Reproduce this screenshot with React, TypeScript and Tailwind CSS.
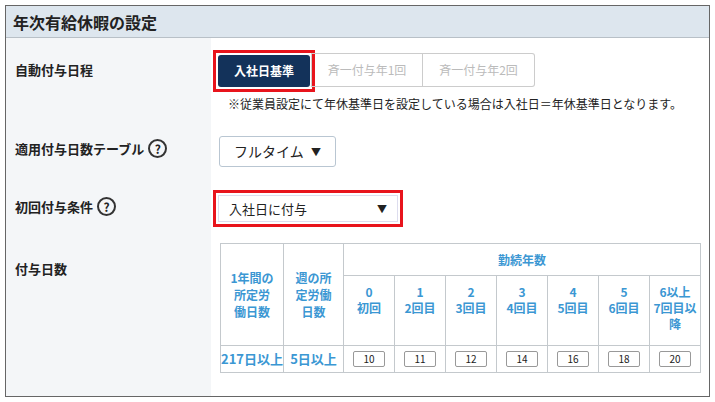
import React from "react";

const Q = () => (
  <span className="inline-flex items-center justify-center w-[19px] h-[19px] rounded-full border-2 border-[#333] text-[12px] font-bold leading-none ml-1">?</span>
);

export default function App() {
  const cols = [["0","初回"],["1","2回目"],["2","3回目"],["3","4回目"],["4","5回目"],["5","6回目"],["6以上","7回目以降"]];
  const vals = ["10","11","12","14","16","18","20"];
  const td = "border border-[#c4c9cd] text-[#3b97d3] font-bold text-[12px] text-center";
  return (
    <div className="w-[715px] h-[402px] bg-white p-[5px] overflow-hidden" style={{ fontFamily: '"Noto Sans CJK JP", "Noto Sans", sans-serif' }}>
      <div className="w-[705px] h-[392px] border border-[#666] overflow-hidden flex flex-col">
        <div className="h-[32px] bg-[#dde6ee] border-b border-[#b8c0c7] flex items-center pl-[7px] text-[16px] font-bold text-[#222]">年次有給休暇の設定</div>
        <div className="flex flex-1">
          <div className="w-[205px] bg-[#f4f6f8] text-[13px] font-bold text-[#222] pl-[9px] shrink-0">
            <div className="h-[60px] pt-[22px]">自動付与日程</div>
            <div className="h-[58px] pt-[43px] flex items-center">適用付与日数テーブル<Q /></div>
            <div className="h-[58px] pt-[43px] flex items-center">初回付与条件<Q /></div>
            <div className="pt-[45px]">付与日数</div>
          </div>
          <div className="flex-1 pl-[7px] text-[#222]">
            <div className="flex mt-[12px] ml-[-5px]">
              <div className="border-[3px] border-[#e8141c] p-[2px] pr-[2px]">
                <div className="w-[92px] h-[32px] bg-[#13325a] rounded-[3px] text-white text-[12px] font-bold flex items-center justify-center">入社日基準</div>
              </div>
              <div className="w-[112px] h-[34px] mt-[3px] ml-[-4px] border border-[#ccc] text-[#bbb] text-[12px] flex items-center justify-center">斉一付与年1回</div>
              <div className="w-[112px] h-[34px] mt-[3px] border border-l-0 border-[#ccc] rounded-r-[3px] text-[#bbb] text-[12px] flex items-center justify-center">斉一付与年2回</div>
            </div>
            <div className="text-[12px] mt-[3px] ml-[10px]">※従業員設定にて年休基準日を設定している場合は入社日＝年休基準日となります。</div>
            <div className="mt-[23px] ml-[1px] w-[117px] h-[31px] border border-[#b9c6d2] rounded-[3px] flex items-center justify-between px-[14px] text-[14px]">
              <span>フルタイム</span><span className="text-[10px]">▼</span>
            </div>
            <div className="mt-[23px] ml-[-5px] w-[190px] border-[3px] border-[#e8141c] p-[2px]">
              <div className="h-[27px] flex items-center justify-between px-[10px] text-[13px] border border-[#dde] ">
                <span>入社日に付与</span><span className="text-[10px]">▼</span>
              </div>
            </div>
            <table className="mt-[16px] ml-[2px] border-collapse">
              <tbody>
                <tr className="h-[32px]">
                  <td rowSpan={2} className={`${td} w-[63px] leading-[17px] align-middle`}>1年間の<br/>所定労<br/>働日数</td>
                  <td rowSpan={2} className={`${td} w-[60px] leading-[17px]`}>週の所<br/>定労働<br/>日数</td>
                  <td colSpan={7} className={td}>勤続年数</td>
                </tr>
                <tr className="h-[70px]">
                  {cols.map(c => (
                    <td key={c[0]} className={`${td} w-[51px] leading-[16px] align-top pt-[8px]`}>{c[0]}<br/>{c[1]}</td>
                  ))}
                </tr>
                <tr className="h-[27px]">
                  <td className={`${td} text-[13px]`}>217日以上</td>
                  <td className={`${td} text-[13px]`}>5日以上</td>
                  {vals.map(v => (
                    <td key={v} className={td}>
                      <div className="mx-auto w-[32px] h-[16px] border border-[#999] rounded-[2px] text-[#222] font-normal text-[10px] leading-[14px] bg-white">{v}</div>
                    </td>
                  ))}
                </tr>
              </tbody>
            </table>
          </div>
        </div>
      </div>
    </div>
  );
}
